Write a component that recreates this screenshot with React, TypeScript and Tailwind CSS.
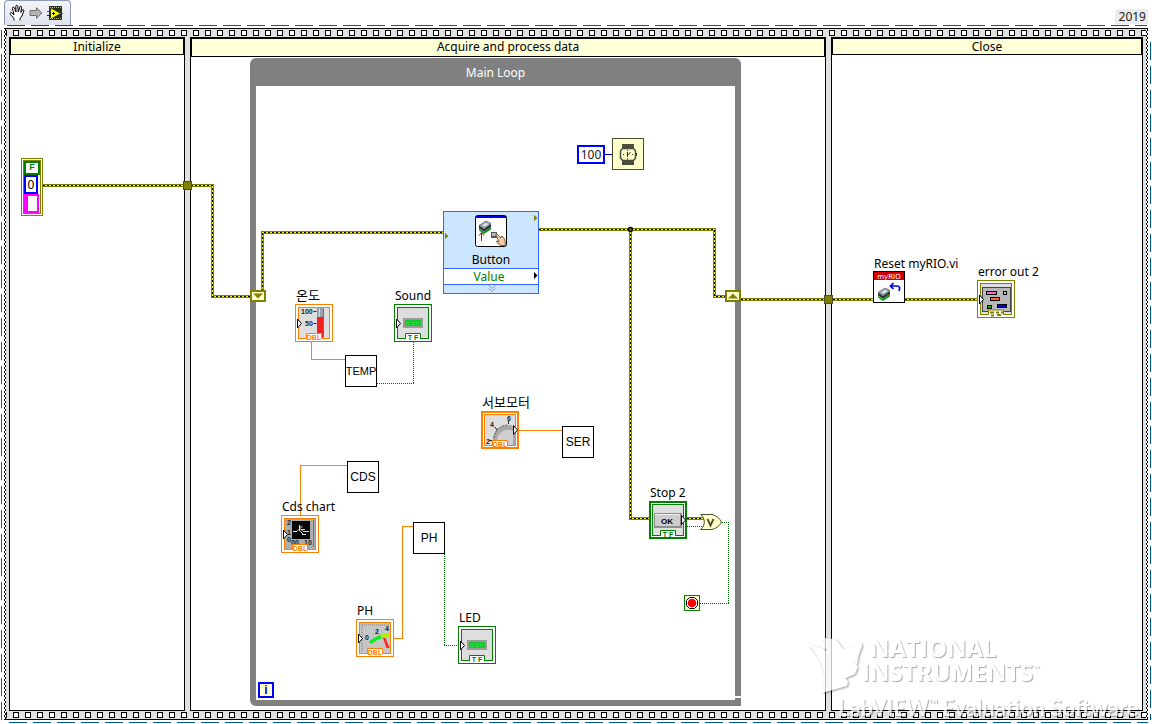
import type { ReactNode } from 'react';

const ORANGE = '#ff8000';
const GREEN = '#008000';
const OLIVE = '#808000';

function Holes() {
  return (
    <div className="flex h-2 gap-1.5 overflow-hidden pt-px" aria-hidden="true">
      <span className="h-1.5 w-px shrink-0 bg-black" />
      {Array.from({ length: 320 }, (_, i) => (
        <span key={i} className="size-1.5 shrink-0 border border-black bg-white" />
      ))}
    </div>
  );
}

function Frame({ title, className, tall, children }: { title: string; className: string; tall?: boolean; children?: ReactNode }) {
  return (
    <section className={`flex flex-col border border-t-2 border-black bg-white ${className}`}>
      <h2
        className={`shrink-0 border border-t-0 border-b border-black bg-[#ffffd8] text-center leading-4 ${
          tall ? 'h-[18px]' : 'h-4'
        }`}
      >
        {title}
      </h2>
      {children}
    </section>
  );
}

function Edge() {
  return (
    <div className="w-0.5 shrink-0 bg-[repeating-conic-gradient(#000_0_25%,#fff_0_50%)] bg-[size:2px_4px]" />
  );
}

function Label({ className, children }: { className: string; children: ReactNode }) {
  return <span className={`absolute whitespace-nowrap leading-4 ${className}`}>{children}</span>;
}

function SubVI({ className, children }: { className: string; children: ReactNode }) {
  return (
    <div
      className={`absolute flex size-8 items-center justify-center border border-black bg-white font-['Liberation_Sans',sans-serif] ${className}`}
    >
      {children}
    </div>
  );
}

type TerminalProps = {
  className: string;
  color: string;
  tag?: string;
  source?: boolean;
  label: string;
  children: ReactNode;
};

function Terminal({ className, color, tag, source, label, children }: TerminalProps) {
  return (
    <svg className={`absolute size-[38px] ${className}`} viewBox="0 0 38 38" role="img" aria-label={label}>
      <rect width="38" height="38" fill={color} />
      {source ? (
        <rect x="2" y="2" width="34" height="34" fill="#fff" />
      ) : (
        <rect x="1" y="1" width="36" height="36" fill="#fff" />
      )}
      <rect x="3.5" y="3.5" width="31" height="31" fill="#dedede" stroke={color} />
      {children}
      {source ? (
        <path d="M32.5 14.5v9l4-4.5z" fill="#fff" stroke="#000" />
      ) : (
        <path d="M2.5 15v9l4-4.5z" fill="#fff" stroke="#000" />
      )}
      {tag && (
        <>
          <path d="M9 34.5h2.5v-5h15v5H29" fill="#fff" stroke={color} />
          <rect x="12" y="34" width="14" height="2" fill="#fff" />
          <text
            x="19"
            y="36"
            textAnchor="middle"
            fontSize="7"
            fontWeight="700"
            fontFamily="Liberation Sans, sans-serif"
            fill={color}
          >
            {tag}
          </text>
        </>
      )}
    </svg>
  );
}

function Led() {
  return (
    <>
      <rect x="9" y="14" width="20" height="10" fill="#9c9c9c" />
      <rect x="11" y="16" width="16" height="6" fill="#16c832" />
      <path d="M12 18.5h14M13 20.5h11" stroke="#2fe044" strokeDasharray="3 2" />
    </>
  );
}

function Digit({ x, y, children }: { x: number; y: number; children: string }) {
  return (
    <text x={x} y={y} fontSize="7" fontWeight="700" fontFamily="Liberation Sans, sans-serif" fill="#222">
      {children}
    </text>
  );
}

function ErrorWire({ d }: { d: string }) {
  return (
    <g fill="none" shapeRendering="crispEdges">
      <path d={d} stroke="#808000" strokeWidth="3" />
      <path d={d} stroke="#ffff00" strokeWidth="1" />
      <path d={d} stroke="#000" strokeWidth="1" strokeDasharray="2 2" />
    </g>
  );
}

function Wires() {
  return (
    <svg className="pointer-events-none absolute inset-0 size-full" aria-hidden="true">
      <ErrorWire d="M43 185.5H212.5V296.5H251" />
      <ErrorWire d="M262.5 291V232.5H443" />
      <ErrorWire d="M539 229.5H714.5V296.5H725" />
      <ErrorWire d="M630.5 229.5V518.5H649" />
      <ErrorWire d="M687 518.5H704" />
      <ErrorWire d="M741 299.5H873" />
      <ErrorWire d="M905 299.5H977" />
      <circle cx="630.5" cy="229.5" r="2" fill="#808000" stroke="#000" strokeWidth="1.5" />
      <g fill="none" stroke={ORANGE} shapeRendering="crispEdges">
        <path d="M311.5 342V359.5H345" />
        <path d="M519 430.5H562" />
        <path d="M300.5 515V465.5H347" />
        <path d="M413 526.5H402.5V638.5H394" />
      </g>
      <g fill="none" stroke="#006a00" strokeDasharray="1 1" shapeRendering="crispEdges">
        <path d="M413.5 342V383M377 383.5H414" />
        <path d="M444.5 554V645M444 645.5H458" />
        <path d="M687 526.5H704" />
        <path d="M722 522.5H729M728.5 524V603M700 603.5H729" />
      </g>
      <path d="M605 154.5H612" stroke="#0000ff" shapeRendering="crispEdges" />
      <rect x="183.5" y="181.5" width="8" height="8" fill={OLIVE} stroke="#4c4c33" />
      <rect x="824.5" y="295.5" width="8" height="8" fill={OLIVE} stroke="#4c4c33" />
      <g fill="#ffffd0" stroke={OLIVE} strokeWidth="2">
        <rect x="251" y="291" width="14" height="10" />
        <rect x="726" y="291" width="14" height="10" />
      </g>
      <path d="M253 293.5h10l-5 5z" fill={OLIVE} />
      <path d="M728 298.5h10l-5-5z" fill={OLIVE} />
    </svg>
  );
}

function Chip() {
  return (
    <g>
      <path d="M4 10v1.500l5 3.500 7-4.500V8l-7 4.500z" fill="#0a9a1a" />
      <path d="M4 6.500v3l5 3 7-4.500V5L9 10z" fill="#2c3033" />
      <path d="M4 6.500L11 2l5 2.500L9 9.500z" fill="#9cabb4" stroke="#4a5258" strokeWidth=".7" />
      <path d="M7.500 6.300L11 4l2.500 1.200-3.500 2.300z" fill="#dbe9f1" />
    </g>
  );
}

function Watermark() {
  return (
    <div
      aria-hidden="true"
      className="pointer-events-none absolute top-[632px] left-[806px] font-bold whitespace-nowrap text-white opacity-75 [text-shadow:1px_1px_1px_rgba(0,0,0,0.45)]"
    >
      <div className="flex">
        <svg className="h-16 w-14 shrink-0 drop-shadow-[1px_1px_1px_rgba(0,0,0,0.5)]" viewBox="0 0 56 64">
          <path d="M2 12C8 14 15 15 20 19C27 26 33 37 42 50L41 54L16 61C22 46 18 30 2 12Z" fill="#fff" />
          <path d="M18 6L30 7C38 18 45 27 52 35L49 42L33 49C26 38 19 27 18 6Z" fill="#fff" />
          <path d="M35 20C39 14 46 18 61 7C54 16 52 24 51 33C46 29 41 24 35 20Z" fill="#fff" />
          <path d="M42 49L16 61C22 54 27 48 28 39Z" fill="#fff" />
        </svg>
        <div className="pt-1 font-['Open_Sans',sans-serif] text-2xl leading-6">
          <div className="pl-2">NATIONAL</div>
          <div className="flex items-start">
            INSTRUMENTS<span className="text-[8px] leading-4">™</span>
          </div>
        </div>
      </div>
      <div className="flex items-start pl-8 font-['Lato',sans-serif] text-[22px] leading-6">
        LabVIEW<span className="mr-1 text-[12px] leading-4">™</span>Evaluation Software
      </div>
    </div>
  );
}

export default function App() {
  return (
    <main className="relative flex min-h-screen w-full flex-col overflow-hidden bg-white font-['Noto_Sans','Noto_Sans_CJK_KR',sans-serif] text-[12px] text-black">
      <header className="flex h-[25px] shrink-0 items-end justify-between px-1">
        <div className="flex h-[25px] w-[67px] items-center gap-1 rounded-t border border-b-0 border-[#8b99b5] bg-linear-to-b from-[#f4f5f9] to-[#dfe3ec] pl-1">
          <button type="button" aria-label="Pan" className="h-[18px] w-4">
            <svg viewBox="0 0 16 18" className="h-[18px] w-4">
              <path
                d="M5 16.500v-2L1.500 10.500c-1-1.500.5-2.500 1.500-1.500l2 2L3.500 4.500c-.3-1.500 1.500-2 2-.5L7 8 6.800 2.500c0-1.600 1.900-1.600 2 0L9.300 8l1.500-5c.5-1.500 2-1 1.800.4L11.800 8.500l1.400-2.300c.8-1.200 2.100-.4 1.600.8L13 12l-2 2.500v2"
                fill="#fff"
                stroke="#000"
                strokeWidth="1"
              />
            </svg>
          </button>
          <button type="button" aria-label="Run" className="h-3 w-[14px]">
            <svg viewBox="0 0 14 12" className="h-3 w-[14px]">
              <path d="M1 3.500h6.500V.7L13 6l-5.500 5.300V8.500H1z" fill="#b4b4b4" stroke="#6e6e6e" />
            </svg>
          </button>
          <button type="button" aria-label="VI icon" className="h-4 w-[18px]">
            <svg viewBox="0 0 18 16" className="h-4 w-[18px]">
              <rect x="2" y="1" width="13" height="14" fill="#283418" />
              <path d="M3 2.500h11M3 13.500h11" stroke="#b5b5a0" strokeDasharray="1 1" />
              <path d="M0 6.500h4" stroke="#f00" />
              <path d="M0 10.500h4" stroke="#00f" />
              <path d="M11 8.500h5" stroke="#f00" />
              <path d="M4 3.500v10l9-5z" fill="#ff0" />
              <path d="M5 8.500h3M6.500 7v3" stroke="#000" />
            </svg>
          </button>
        </div>
        <div className="mb-px h-[15px] rounded-tl bg-[#ececec] pr-0.5 pl-1 leading-[15px] text-[#222]">2019</div>
      </header>

      <div className="mr-[5px] ml-[7px] h-px shrink-0 bg-[repeating-linear-gradient(90deg,#005a96_0_18px,transparent_18px_24px)]" />

      <div className="flex flex-1 px-px">
        <div className="mt-1 w-px shrink-0 bg-[repeating-linear-gradient(180deg,#005a96_0_18px,transparent_18px_24px)]" />
        <div className="mx-0.5 mt-0.5 flex min-w-0 flex-1 border-y border-black bg-[#e0e0e0]">
          <Edge />
          <div className="flex min-w-0 flex-1 flex-col">
            <Holes />
            <div className="flex flex-1 gap-[5px] px-[3px]">
              <Frame title="Initialize" className="w-44 shrink-0" />
              <Frame title="Acquire and process data" className="w-[636px] shrink-0" tall>
                <div className="relative mt-px mb-1 ml-[59px] flex w-[491px] flex-1 flex-col rounded-md rounded-br-none bg-[#808080] px-1.5 pb-1.5">
                  <h3 className="h-7 text-center leading-[30px] text-white">Main Loop</h3>
                  <div className="flex-1 bg-white" />
                  <span className="absolute right-0 bottom-2 h-0.5 w-1.5 bg-white" />
                </div>
              </Frame>
              <Frame title="Close" className="min-w-0 flex-1" />
            </div>
            <Holes />
          </div>
          <Edge />
        </div>
        <div className="mt-4 w-px shrink-0 bg-[repeating-linear-gradient(180deg,#005a96_0_18px,transparent_18px_24px)]" />
      </div>
      <div className="mt-0.5 mr-1 mb-px ml-[9px] h-px shrink-0 bg-[repeating-linear-gradient(90deg,#005a96_0_18px,transparent_18px_24px)]" />

      <Wires />

      <div className="absolute top-[158px] left-[21px] flex h-[58px] w-[22px] flex-col border border-[#808000] bg-white p-px">
        <div className="flex flex-1 flex-col items-start border border-[#808000]">
          <span className="flex h-[14px] w-4 items-center justify-center border-2 border-[#008000] bg-white font-['Liberation_Sans',sans-serif] text-[9px] font-bold text-[#008000]">
            F
          </span>
          <span className="flex h-[19px] w-[14px] items-center justify-center border-2 border-[#0000ff] bg-white">0</span>
          <span className="h-[19px] w-[15px] border-2 border-l-4 border-[#ff00ff] bg-white" />
        </div>
      </div>

      <div className="absolute top-[145px] left-[577px] flex h-[19px] w-7 items-center justify-center border-2 border-[#0000ff] bg-white text-[#222]">
        100
      </div>
      <svg className="absolute top-[138px] left-[612px] size-8" viewBox="0 0 32 32" role="img" aria-label="Wait">
        <rect x=".5" y=".5" width="31" height="31" fill="#ffffcc" stroke="#4c4c33" />
        <path d="M10 6h12v5H10zM10 22h12v5H10z" fill="#4c4c3c" />
        <path d="M10.500 10.500h11l2 2.500v7l-2 2.500h-11l-2-2.500v-7z" fill="#ffffcc" stroke="#4c4c3c" strokeWidth="1.500" />
        <path d="M15.500 12v1M15.500 20v1.500M15.500 14v5M15.500 17.500l3-3.500M11 16.500h1M20 16.500h1M24.500 15v3" stroke="#333" fill="none" />
      </svg>

      <div className="absolute top-[211px] left-[443px] flex h-[83px] w-24 flex-col border border-[#3366ff] bg-[#cce6ff]">
        <div className="flex h-14 flex-col items-center pt-[3px]">
          <svg className="size-8 shrink-0" viewBox="0 0 32 32" role="img" aria-label="Button">
            <rect x=".5" y=".5" width="31" height="31" rx="2" fill="#fff" stroke="#000" />
            <path d="M1 1h30v2H1z" fill="#0000e0" />
            <g transform="translate(0 4)">
              <Chip />
            </g>
            <path d="M6.500 26v-8M4 20.500l2.500-3 2.500 3" fill="none" stroke="#e00000" />
            <path d="M16 17h6v6h-6z" fill="#555" />
            <path d="M17 18h4v3h-4z" fill="#bbb" />
            <path
              d="M20.500 19.500l1.500-.5 4 4 .5-2 1.500 1 1.500 2 1 4-.5 2.500h-4l-4-3-.5-1.500 2.500.5z"
              fill="#f6c9a4"
              stroke="#442"
              strokeWidth=".8"
            />
          </svg>
          <span className="mt-[5px] leading-4">Button</span>
        </div>
        <div className="h-[17px] border-y border-[#3366ff] bg-white pr-1 text-center leading-4 text-[#008000]">Value</div>
        <svg className="h-2 w-full" viewBox="0 0 94 8" aria-hidden="true">
          <path d="M44.500 .5l3.500 3 3.500-3M44.500 3.500l3.500 3 3.500-3" fill="none" stroke="#8a9fc4" />
        </svg>
      </div>
      <svg className="pointer-events-none absolute top-[211px] left-[443px] h-[83px] w-24" viewBox="0 0 96 83" aria-hidden="true">
        <path d="M2 22v6l3.500-3zM91 4v6l3.500-3z" fill={OLIVE} />
        <path d="M91 61v7l3.500-3.500z" fill="#000" />
      </svg>

      <Label className="top-[287px] left-[296px] text-[13px]">온도</Label>
      <Terminal className="top-[304px] left-[295px]" color={ORANGE} tag="DBL" label="온도">
        <Digit x={6} y={10}>100</Digit>
        <Digit x={10} y={22}>50</Digit>
        <path d="M18.500 7.500h3M18.500 19.500h3" stroke="#222" />
        <rect x="22" y="4" width="7" height="30" fill="#9aa0ae" />
        <path d="M24.500 4v9" stroke="#d8dce6" />
        <rect x="22" y="13" width="6" height="20" fill="#f02020" />
        <path d="M28.500 5v28" stroke="#6c6c6c" />
      </Terminal>

      <Label className="top-[288px] left-[395px]">Sound</Label>
      <Terminal className="top-[304px] left-[394px]" color={GREEN} tag="T F" label="Sound">
        <Led />
      </Terminal>
      <SubVI className="top-[355px] left-[345px] text-[11px]">TEMP</SubVI>

      <Label className="top-[394px] left-[482px] text-[13px]">서보모터</Label>
      <Terminal className="top-[411px] left-[481px]" color={ORANGE} tag="DBL" source label="서보모터">
        <path d="M12 34V27C13 18 20 14 27 14C31 14 33 16 34 18V34Z" fill="#a8a8a8" />
        <path d="M16 28C18 20 26 17 32 20V34H17Z" fill="#cfcfcf" />
        <path d="M13 27C14 18 21 14 27 14" fill="none" stroke="#666" strokeDasharray="2 1" />
        <Digit x={9} y={16}>4</Digit>
        <Digit x={26} y={10}>6</Digit>
        <Digit x={5} y={33}>2</Digit>
        <path d="M14 16l2 3M27.500 10v3M8 29.500h3" stroke="#222" />
      </Terminal>
      <SubVI className="top-[426px] left-[562px] text-[12px]">SER</SubVI>
      <SubVI className="top-[461px] left-[347px] text-[12px]">CDS</SubVI>

      <Label className="top-[499px] left-[282px]">Cds chart</Label>
      <Terminal className="top-[515px] left-[281px]" color={ORANGE} tag="DBL" label="Cds chart">
        <rect x="4" y="4" width="30" height="30" fill="#adadad" />
        <path d="M32.500 5v27" stroke="#777" />
        <rect x="11" y="6" width="18" height="18" fill="#050505" />
        <path d="M12 16.500h4l3-3 3 3h6M18.500 10v6M18.500 12h3M20 14.500h4M19 16l4 4M21 19.500h4" stroke="#e0e0e0" fill="none" />
        <Digit x={6} y={10}>2</Digit>
        <Digit x={6} y={20}>1</Digit>
        <Digit x={6} y={27}>0</Digit>
        <Digit x={10} y={30}>00</Digit>
        <Digit x={23} y={30}>10</Digit>
      </Terminal>
      <SubVI className="top-[522px] left-[413px] text-[12px]">PH</SubVI>

      <Label className="top-[603px] left-[357px]">PH</Label>
      <Terminal className="top-[619px] left-[356px]" color={ORANGE} tag="DBL" label="PH">
        <rect x="4" y="4" width="30" height="30" fill="#c6c6c6" />
        <path d="M6 5v28M6 6h27" stroke="#a2a2a2" strokeWidth="2" strokeDasharray="1 1" />
        <path d="M14 24Q21 18 28 17" stroke="#10ee20" strokeWidth="3.500" fill="none" />
        <path d="M25 17.500Q29 15.500 34 16" stroke="#b4f000" strokeWidth="3.500" fill="none" />
        <path d="M27 19h2.500l4 10h-3z" fill="#f22" />
        <Digit x={9} y={21}>0</Digit>
        <Digit x={19} y={15}>2</Digit>
        <Digit x={29} y={12}>4</Digit>
      </Terminal>

      <Label className="top-[610px] left-[459px]">LED</Label>
      <Terminal className="top-[626px] left-[458px]" color={GREEN} tag="T F" label="LED">
        <Led />
      </Terminal>

      <Label className="top-[485px] left-[650px]">Stop 2</Label>
      <Terminal className="top-[501px] left-[649px]" color={GREEN} tag="T F" source label="Stop 2">
        <rect x="5" y="12" width="28" height="15" fill="#8e8e8e" />
        <rect x="6" y="13" width="25" height="12" fill="#cdcdcd" />
        <path d="M6 13.500h25" stroke="#f2f2f2" />
        <text x="18" y="23" textAnchor="middle" fontSize="8" fontWeight="700" fontFamily="Liberation Sans, sans-serif">
          OK
        </text>
      </Terminal>
      <svg className="absolute top-[514px] left-[700px] h-4 w-[22px]" viewBox="0 0 22 16" role="img" aria-label="Or">
        <path d="M.7.5H12C17 1.500 20 5 21.500 8C20 11 17 14.500 12 15.500H.7C5.500 11 5.500 5 .7.5Z" fill="#ffffcc" stroke="#4c4c33" />
        <path d="M7.500 5l3 6.500 3-6.500" fill="none" stroke="#4c4c33" strokeWidth="1.800" />
      </svg>
      <svg className="absolute top-[595px] left-[684px] size-4" viewBox="0 0 16 16" role="img" aria-label="Loop condition">
        <rect x=".5" y=".5" width="15" height="15" fill="#ffffcc" stroke={GREEN} />
        <path d="M5.500 2.500h5l3 3v5l-3 3h-5l-3-3v-5z" fill="#fff" stroke="#000" />
        <circle cx="8" cy="8" r="4.300" fill="#f00" />
      </svg>

      <div className="absolute top-[682px] left-[258px] flex size-4 items-center justify-center border-2 border-[#0000ff] bg-[#ffffcc] font-['Liberation_Sans',sans-serif] font-bold text-[#0000ff]">
        i
      </div>

      <Label className="top-[256px] left-[874px]">Reset myRIO.vi</Label>
      <svg className="absolute top-[271px] left-[873px] size-8" viewBox="0 0 32 32" role="img" aria-label="Reset myRIO">
        <rect x=".5" y=".5" width="31" height="31" fill="#fff" stroke="#000" />
        <rect x="1" y="1" width="30" height="8" fill="#cc0000" />
        <text x="16" y="7.500" textAnchor="middle" fontSize="7" fontFamily="DejaVu Sans, sans-serif" fill="#fff">
          myRIO
        </text>
        <g transform="translate(1 15)">
          <Chip />
        </g>
        <path d="M20.500 12l-3 3 3 3M18 15h6c3 0 3 2 2 5" fill="none" stroke="#0000ee" strokeWidth="1.700" />
      </svg>

      <Label className="top-[264px] left-[978px]">error out 2</Label>
      <Terminal className="top-[280px] left-[977px]" color={OLIVE} label="error out 2">
        <rect x="5.500" y="7.500" width="28" height="24" fill="#b8b8b8" stroke="#444" />
        <g stroke="#000">
          <rect x="9.500" y="11.500" width="10" height="3" fill="#ff66cc" />
          <rect x="26.500" y="11.500" width="3" height="3" fill="#ccc" />
          <rect x="13.500" y="17.500" width="9" height="3" fill="#ff6633" />
          <rect x="10.500" y="25.500" width="4" height="3" fill="#00b000" />
          <rect x="20.500" y="24.500" width="9" height="3" fill="#0000dd" />
        </g>
        <path d="M11.500 35v-5h15v5" fill="#fff" stroke={OLIVE} />
        <path d="M13 32.500h4M19 32.500h3M24 32.500h2M14 35.500h3M20 35h4" stroke={OLIVE} strokeWidth="2" />
      </Terminal>

      <Watermark />
    </main>
  );
}
